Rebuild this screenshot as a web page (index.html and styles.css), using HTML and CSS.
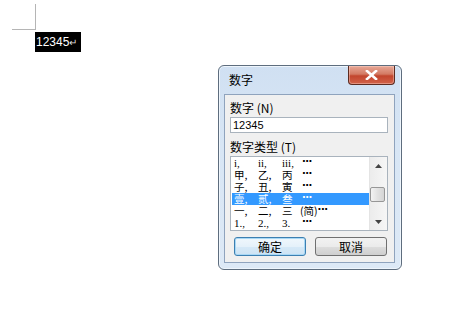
FILE: index.html
```html
<!DOCTYPE html>
<html>
<head>
<meta charset="utf-8">
<link rel="stylesheet" href="styles.css">
</head>
<body>
<div class="doc">
  <div class="corner-v"></div>
  <div class="corner-h"></div>
  <div class="sel-text">12345<span class="ret">↵</span></div>
</div>
<div class="dialog">
  <div class="titlebar">
    <span class="title">数字</span>
    <div class="close"><svg width="13" height="10" viewBox="0 0 13 10"><path d="M2 1 L11 9 M11 1 L2 9" stroke="#fff" stroke-width="2.6" stroke-linecap="square"/></svg></div>
  </div>
  <div class="client">
    <div class="label">数字 (<u>N</u>)</div>
    <div class="input">12345</div>
    <div class="label">数字类型 (<u>T</u>)</div>
    <div class="list">
      <div class="items">
        <div class="row"><span class="c lat">i,</span><span class="c lat">ii,</span><span class="c lat">iii,</span><span class="d">···</span></div>
        <div class="row"><span class="c">甲,</span><span class="c">乙,</span><span class="c">丙</span><span class="d">···</span></div>
        <div class="row"><span class="c">子,</span><span class="c">丑,</span><span class="c">寅</span><span class="d">···</span></div>
        <div class="row sel"><span class="c">壹,</span><span class="c">贰,</span><span class="c">叁</span><span class="d">···</span></div>
        <div class="row"><span class="c">一,</span><span class="c">二,</span><span class="c">三</span><span class="j">(简)</span><span class="d2">···</span></div>
        <div class="row"><span class="c lat">1.,</span><span class="c lat">2.,</span><span class="c lat">3.</span><span class="d">···</span></div>
      </div>
      <div class="scroll">
        <div class="arrow"><svg width="7" height="4" viewBox="0 0 7 4"><path d="M0 4 L3.5 0 L7 4 Z" fill="#444"/></svg></div>
        <div class="track"><div class="thumb"></div></div>
        <div class="arrow"><svg width="7" height="4" viewBox="0 0 7 4"><path d="M0 0 L3.5 4 L7 0 Z" fill="#444"/></svg></div>
      </div>
    </div>
    <div class="buttons">
      <div class="btn default">确定</div>
      <div class="btn">取消</div>
    </div>
  </div>
</div>
</body>
</html>
```
FILE: styles.css
```css
html, body {
  margin: 0;
  padding: 0;
  background: #fff;
  width: 475px;
  height: 324px;
  overflow: hidden;
  font-family: "Noto Sans CJK SC", "Liberation Sans", sans-serif;
}
.doc {
  position: relative;
  height: 0;
}
.corner-v {
  position: absolute;
  left: 35px;
  top: 4px;
  width: 1px;
  height: 26px;
  background: #b5b5b5;
}
.corner-h {
  position: absolute;
  left: 12px;
  top: 29px;
  width: 24px;
  height: 1px;
  background: #b5b5b5;
}
.sel-text {
  position: absolute;
  left: 35px;
  top: 32px;
  width: 46px;
  height: 20px;
  background: #000;
  color: #fff;
  font-family: "Liberation Sans", sans-serif;
  font-size: 12px;
  line-height: 20px;
  padding-left: 1px;
  box-sizing: border-box;
}
.ret {
  font-size: 10px;
  color: #ddd;
}
.dialog {
  position: absolute;
  left: 218px;
  top: 65px;
  width: 184px;
  height: 205px;
  box-sizing: border-box;
  border: 1px solid #5e6d7e;
  border-radius: 6px;
  background: linear-gradient(#d0e0f2, #d8e6f5 40%, #dde9f6);
  box-shadow: inset 0 0 0 1px #eef5fc;
  padding: 0 6px 6px 5px;
  display: flex;
  flex-direction: column;
}
.titlebar {
  height: 28px;
  display: flex;
  align-items: flex-start;
  justify-content: space-between;
  flex: none;
}
.title {
  font-size: 12px;
  color: #000;
  margin-top: 6px;
  margin-left: 5px;
  line-height: 16px;
}
.close {
  width: 47px;
  height: 19px;
  box-sizing: border-box;
  border: 1px solid #5c2b20;
  border-top: none;
  border-radius: 0 0 4px 4px;
  background: linear-gradient(#e8a897, #d37a63 45%, #c2452d 55%, #d2634a);
  display: flex;
  align-items: center;
  justify-content: center;
  box-shadow: inset 0 0 0 1px rgba(255,220,210,0.4);
}
.client {
  flex: 1;
  background: #f0f0f0;
  border: 1px solid #8fa3bd;
  padding: 5px 6px 0 5px;
  display: flex;
  flex-direction: column;
}
.label {
  font-size: 12px;
  line-height: 16px;
  color: #000;
  height: 17px;
}
.label u {
  text-decoration: none;
}
.input {
  width: 158px;
  height: 16px;
  box-sizing: border-box;
  border: 1px solid #a9b3bd;
  background: #fff;
  font-family: "Liberation Sans", sans-serif;
  font-size: 11px;
  line-height: 14px;
  padding-left: 2px;
  margin-bottom: 6px;
  color: #000;
}
.list {
  width: 158px;
  height: 75px;
  box-sizing: border-box;
  border: 1px solid #a9b3bd;
  background: #fff;
  display: flex;
}
.items {
  flex: 1;
  padding: 0 0 0 1px;
  overflow: hidden;
}
.row {
  height: 12px;
  line-height: 12px;
  font-size: 10.5px;
  color: #000;
  display: flex;
  padding-left: 2px;
}
.row.sel {
  background: #3399ff;
  color: #fff;
}
.c {
  width: 24px;
  flex: none;
}
.lat {
  font-family: "Liberation Serif", serif;
  font-size: 11px;
}
.d, .d2 {
  margin-left: -4px;
  font-family: "DejaVu Sans", sans-serif;
  font-weight: bold;
  font-size: 10px;
  letter-spacing: -0.5px;
  line-height: 10px;
}
.d2 {
  margin-left: 0;
}
.j {
  margin-left: -6px;
}
.scroll {
  width: 17px;
  flex: none;
  background: linear-gradient(90deg, #ececec, #f6f6f6);
  display: flex;
  flex-direction: column;
  align-items: center;
  border-left: 1px solid #e4e4e4;
}
.arrow {
  height: 17px;
  display: flex;
  align-items: center;
  justify-content: center;
  width: 100%;
}
.track {
  flex: 1;
  width: 100%;
  position: relative;
}
.thumb {
  position: absolute;
  left: 0;
  top: 13px;
  width: 15px;
  height: 15px;
  box-sizing: border-box;
  border: 1px solid #979797;
  border-radius: 2px;
  background: linear-gradient(90deg, #f3f3f3, #e2e2e2 50%, #d5d5d5);
}
.buttons {
  display: flex;
  gap: 9px;
  margin-top: 6px;
  padding-left: 4px;
}
.btn {
  width: 72px;
  height: 19px;
  box-sizing: border-box;
  border: 1px solid #707070;
  border-radius: 3px;
  background: linear-gradient(#f2f2f2, #ebebeb 50%, #dddddd 51%, #cfcfcf);
  font-size: 12px;
  line-height: 17px;
  text-align: center;
  color: #000;
}
.btn.default {
  border-color: #3c7fb1;
  background: linear-gradient(#f0f7fc, #e5f1fa 50%, #d6e9f7 51%, #cde3f4);
  box-shadow: inset 0 0 0 1px #a8d8f5;
}
```
